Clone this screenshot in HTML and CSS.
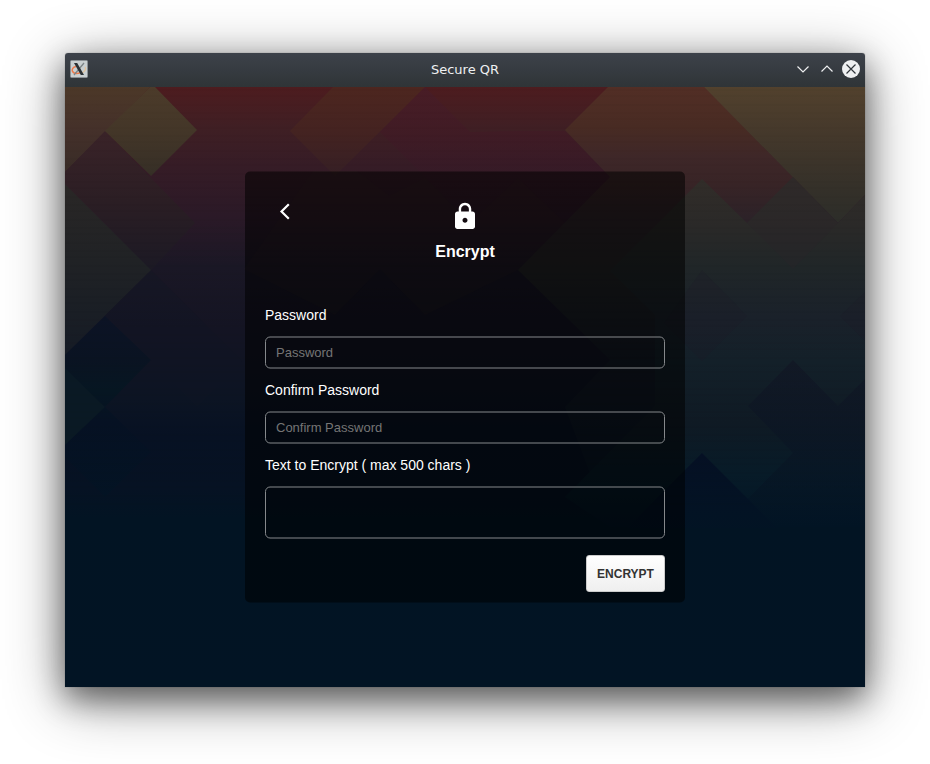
FILE: index.html
```html
<!DOCTYPE html>
<html lang="en">
<head>
<meta charset="utf-8">
<title>Secure QR</title>
<link rel="stylesheet" href="styles.css">
</head>
<body>
<div class="window">
  <header class="titlebar">
    <svg class="app-icon" width="18" height="18" viewBox="0 0 18 18">
      <rect x=".5" y=".5" width="17" height="17" rx="1" fill="#c9cfd0" stroke="#8b9194"/>
      <path d="M6 6.500C3 7 1.500 9.500 2.500 11.500c1.200 2 5 2.200 8.500 1" fill="none" stroke="#ee7a4a" stroke-width="1.500"/>
      <path d="M11.500 13c3.500-1.200 5-4 3.500-6" fill="none" stroke="#e3c29a" stroke-width="1.300"/>
      <path d="M14 3L4 15" stroke="#7d8486" stroke-width="1.300"/>
      <path d="M4 3h3.200l6.800 12h-3.200z" fill="#2b3134"/>
    </svg>
    <span class="title">Secure QR</span>
    <div class="controls">
      <svg width="18" height="18" viewBox="0 0 18 18"><path d="M3.500 6.500L9 12l5.500-5.500" fill="none" stroke="#eff0f1" stroke-width="1.200"/></svg>
      <svg width="18" height="18" viewBox="0 0 18 18"><path d="M3.500 11.500L9 6l5.500 5.500" fill="none" stroke="#eff0f1" stroke-width="1.200"/></svg>
      <svg width="18" height="18" viewBox="0 0 18 18"><circle cx="9" cy="9" r="9" fill="#eff0f1"/><path d="M4.500 4.500l9 9M13.500 4.500l-9 9" stroke="#31363b" stroke-width="1.200"/></svg>
    </div>
  </header>
  <main class="content">
    <svg class="backdrop" width="800" height="600" viewBox="0 0 800 600">
      <defs>
        <linearGradient id="base" gradientUnits="userSpaceOnUse" x1="0" y1="0" x2="0" y2="600">
          <stop offset="0" stop-color="#4d1c1f"/><stop offset=".07" stop-color="#3f1f24"/>
          <stop offset=".13" stop-color="#361c26"/><stop offset=".22" stop-color="#2a1927"/>
          <stop offset=".3" stop-color="#1a1725"/><stop offset=".4" stop-color="#141423"/>
          <stop offset=".52" stop-color="#0c1423"/><stop offset=".58" stop-color="#071123"/>
          <stop offset=".67" stop-color="#061223"/><stop offset=".72" stop-color="#021423"/>
          <stop offset="1" stop-color="#021424"/>
        </linearGradient>
        <linearGradient id="tan" gradientUnits="userSpaceOnUse" x1="0" y1="0" x2="0" y2="136">
          <stop offset="0" stop-color="#52412d"/><stop offset=".35" stop-color="#44382b"/>
          <stop offset=".75" stop-color="#343029"/><stop offset="1" stop-color="#2c2d29"/>
        </linearGradient>
        <linearGradient id="brown" gradientUnits="userSpaceOnUse" x1="0" y1="0" x2="0" y2="90">
          <stop offset="0" stop-color="#4c3828"/><stop offset=".5" stop-color="#44302a"/><stop offset="1" stop-color="#362b26"/>
        </linearGradient>
        <linearGradient id="olive" gradientUnits="userSpaceOnUse" x1="0" y1="0" x2="0" y2="90">
          <stop offset="0" stop-color="#4c3b2a"/><stop offset=".5" stop-color="#433628"/><stop offset="1" stop-color="#352e26"/>
        </linearGradient>
        <linearGradient id="wine" gradientUnits="userSpaceOnUse" x1="0" y1="44" x2="0" y2="184">
          <stop offset="0" stop-color="#3a2328"/><stop offset=".5" stop-color="#2b1e24"/><stop offset="1" stop-color="#1b1924"/>
        </linearGradient>
        <linearGradient id="slate" gradientUnits="userSpaceOnUse" x1="0" y1="96" x2="0" y2="268">
          <stop offset="0" stop-color="#2a2726"/><stop offset=".45" stop-color="#202225"/><stop offset="1" stop-color="#151b25"/>
        </linearGradient>
        <linearGradient id="ember" gradientUnits="userSpaceOnUse" x1="0" y1="0" x2="0" y2="90">
          <stop offset="0" stop-color="#4d261f"/><stop offset=".5" stop-color="#442321"/><stop offset="1" stop-color="#351f25"/>
        </linearGradient>
        <linearGradient id="plum" gradientUnits="userSpaceOnUse" x1="0" y1="0" x2="0" y2="136">
          <stop offset="0" stop-color="#471d29"/><stop offset=".33" stop-color="#411a25"/><stop offset=".65" stop-color="#361a27"/><stop offset="1" stop-color="#2a1927"/>
        </linearGradient>
        <linearGradient id="rust" gradientUnits="userSpaceOnUse" x1="0" y1="0" x2="0" y2="440">
          <stop offset="0" stop-color="#522e25"/><stop offset=".09" stop-color="#482b23"/><stop offset=".16" stop-color="#3e2728"/>
          <stop offset=".22" stop-color="#382426"/><stop offset=".3" stop-color="#2c2228"/><stop offset=".42" stop-color="#222325"/>
          <stop offset=".6" stop-color="#141a24"/><stop offset="1" stop-color="#021424"/>
        </linearGradient>
        <linearGradient id="moss" gradientUnits="userSpaceOnUse" x1="0" y1="90" x2="0" y2="440">
          <stop offset="0" stop-color="#322d29"/><stop offset=".14" stop-color="#2a2928"/><stop offset=".26" stop-color="#202628"/>
          <stop offset=".4" stop-color="#1a212a"/><stop offset=".53" stop-color="#132029"/><stop offset=".7" stop-color="#0f1a24"/>
          <stop offset=".85" stop-color="#071b28"/><stop offset="1" stop-color="#021424"/>
        </linearGradient>
        <linearGradient id="navy" gradientUnits="userSpaceOnUse" x1="0" y1="230" x2="0" y2="440">
          <stop offset="0" stop-color="#0c1325"/><stop offset=".2" stop-color="#0a1322"/><stop offset=".35" stop-color="#061622"/><stop offset=".5" stop-color="#061123"/><stop offset="1" stop-color="#021424"/>
        </linearGradient>
        <linearGradient id="dusk" gradientUnits="userSpaceOnUse" x1="0" y1="270" x2="0" y2="440">
          <stop offset="0" stop-color="#121624"/><stop offset=".6" stop-color="#091524"/><stop offset="1" stop-color="#021424"/>
        </linearGradient>
        <linearGradient id="deep" gradientUnits="userSpaceOnUse" x1="0" y1="366" x2="0" y2="450">
          <stop offset="0" stop-color="#051024"/><stop offset="1" stop-color="#021424"/>
        </linearGradient>
        <pattern id="bands" width="800" height="23" patternUnits="userSpaceOnUse">
          <path d="M0 3h800M0 9h800M0 18h800" stroke="#000" stroke-opacity=".02" stroke-width="2"/>
        </pattern>
      </defs>
      <path fill="url(#base)" d="M0 0h800v600H0z"/>
      <path fill="url(#brown)" d="M0 0h85L0 85z"/>
      <path fill="#101824" opacity=".3" d="M86 183l91 91-45 46-46-47-46-44z"/>
      <path fill="url(#wine)" d="M40 44l90 92-44 47L0 97V85z"/>
      <path fill="url(#olive)" d="M85 0h5l42 43-46 46-46-45z"/>
      <path fill="url(#slate)" d="M0 97l86 86L0 268z"/>
      <path fill="url(#navy)" d="M0 268l40-39 46 44-46 47 46 45-46 45-40-40z"/>
      <path fill="#0a1924" d="M0 281l40 39-40 38z"/>
      <path fill="url(#ember)" d="M268 0h92l-90 89-45-45z"/>
      <path fill="url(#plum)" opacity=".7" d="M360 0l45 45 45-1h50l45 46-45 46H406l-91-91z"/>
      <path fill="#3a2e24" opacity=".14" d="M248 84h44l68 52-90 92-91-46zM360 91l45 45 48-45 47 45-47 47-93 45-90-92z"/>
      <path fill="url(#rust)" d="M543 0h96l89 90-91 350H545l-45-120 45-47-92-90 92-93-45-47z"/>
      <path fill="url(#tan)" d="M639 0h161v108l-27 28z"/>
      <path fill="url(#moss)" d="M637 92l45 44 46-46 45 46 27-28v332H545l-45-30 90-91 0-91-45-44z"/>
      <path fill="#2b232a" opacity=".3" d="M682 136l46-46 45 46-45 46z"/>
      <path fill="#201a26" opacity=".2" d="M637 183l45 46-45 45-38-38zM800 205l-25 24 25 25z"/>
      <path fill="url(#dusk)" opacity=".7" d="M728 273l45 46 27-27v148H655l73-74-45-47z"/>
      <path fill="url(#deep)" d="M637 366l75 75H562z"/>
      <path fill="url(#bands)" d="M0 0h800v420H0z"/>
    </svg>
    <section class="card">
      <div class="head">
        <svg class="back" width="20" height="20" viewBox="0 0 20 20"><path d="M13.800 2.700L6.500 10l7.300 7.300" fill="none" stroke="#fff" stroke-width="2.200"/></svg>
        <svg class="lock" width="30" height="30" viewBox="0 0 24 24"><path fill="#fff" d="M18 8h-1V6c0-2.760-2.240-5-5-5S7 3.240 7 6v2H6c-1.100 0-2 .9-2 2v10c0 1.100.9 2 2 2h12c1.100 0 2-.9 2-2V10c0-1.100-.9-2-2-2zm-6 9c-1.100 0-2-.9-2-2s.9-2 2-2 2 .9 2 2-.9 2-2 2zm3.100-9H8.900V6c0-1.710 1.390-3.100 3.100-3.100s3.100 1.390 3.100 3.100v2z"/></svg>
        <h1>Encrypt</h1>
      </div>
      <label for="pw">Password</label>
      <input id="pw" type="password" placeholder="Password">
      <label for="pw2">Confirm Password</label>
      <input id="pw2" type="password" placeholder="Confirm Password">
      <label for="txt">Text to Encrypt ( max 500 chars )</label>
      <textarea id="txt"></textarea>
      <button type="button">ENCRYPT</button>
    </section>
  </main>
</div>
</body>
</html>
```
FILE: styles.css
```css
* { box-sizing: border-box; }
body {
  margin: 0;
  height: 764px;
  padding: 53px 65px 77px;
  background: #fff;
  overflow: hidden;
  font-family: "Liberation Sans", Arial, sans-serif;
}
.window {
  width: 800px;
  height: 634px;
  border-radius: 3px 3px 0 0;
  box-shadow: 0 0 1px rgba(0,0,0,.5), 0 12px 60px rgba(0,0,0,.45), 0 12px 30px rgba(0,0,0,.45);
}
.titlebar {
  display: grid;
  grid-template-columns: 70px 1fr 70px;
  align-items: center;
  height: 34px;
  padding: 0 5px 2px;
  border-radius: 3px 3px 0 0;
  background: linear-gradient(#3d424a, #2f3437);
}
.app-icon { display: block; }
.title {
  text-align: center;
  font: 13px "DejaVu Sans", sans-serif;
  color: #eff0f1;
}
.controls { display: flex; justify-content: flex-end; gap: 6px; }
.controls svg { display: block; }
.content {
  position: relative;
  display: flex;
  justify-content: center;
  align-items: flex-start;
  height: 600px;
  padding-top: 84px;
  overflow: hidden;
}
.backdrop { position: absolute; inset: 0; }
.card {
  display: flex;
  flex-direction: column;
  width: 440px;
  height: 431px;
  padding: 0 20px;
  border-radius: 5px;
  background: rgba(0,0,0,.53);
  color: #fff;
  transform: translateY(.5px);
}
.head {
  position: relative;
  display: flex;
  flex-direction: column;
  align-items: center;
  height: 135px;
  padding-top: 30px;
}
.back { position: absolute; left: 10px; top: 30px; }
.lock { display: block; }
h1 { margin: 11px 0 0; font-size: 16px; line-height: 18px; font-weight: 700; }
label { font-size: 14px; line-height: 16px; height: 30px; }
input, textarea {
  width: 400px;
  height: 32px;
  margin: 0 0 13px;
  padding: 0 10px 2px;
  border: 1px solid #85888b;
  border-radius: 5px;
  background: transparent;
  color: #fff;
  font: 13px "Liberation Sans", Arial, sans-serif;
}
input::placeholder { color: #757575; }
textarea { height: 52px; margin-bottom: 16px; resize: none; }
button {
  align-self: flex-end;
  width: 79px;
  height: 37px;
  padding: 0;
  border: 1px solid #ccc;
  border-radius: 3px;
  background: linear-gradient(#fff, #efefef);
  color: #333;
  font: 700 12px "Liberation Sans", Arial, sans-serif;
  transform: translateY(.5px);
}
```
